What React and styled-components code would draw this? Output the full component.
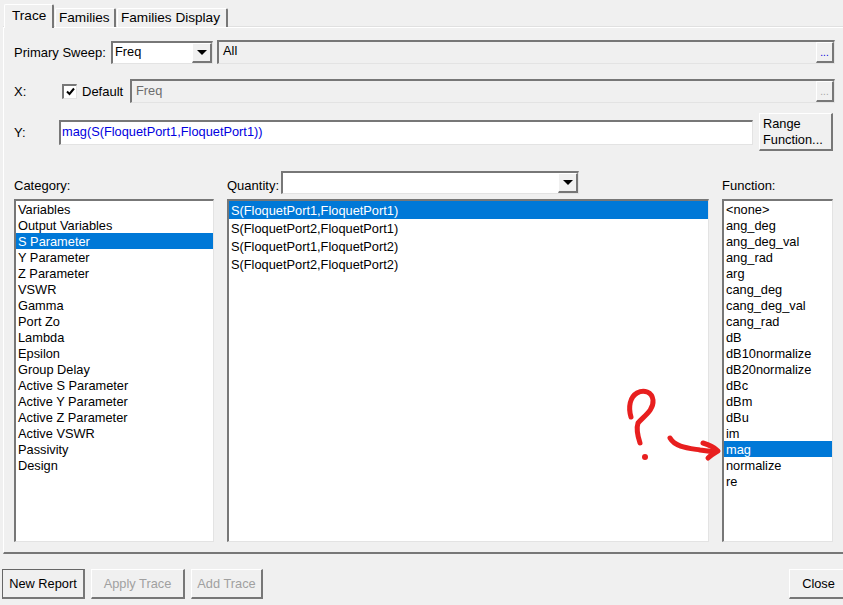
import React from "react";
import styled, { createGlobalStyle } from "styled-components";

const GlobalStyle = createGlobalStyle`
  html, body {
    margin: 0;
    padding: 0;
    background: #f0f0f0;
  }
  body {
    font-family: "Liberation Sans", Arial, sans-serif;
    font-size: 12.8px;
    color: #000;
  }
`;

const Window = styled.div`
  position: relative;
  width: 843px;
  height: 605px;
  overflow: hidden;
  padding-top: 4px;
  box-sizing: border-box;
`;

const TabBar = styled.div`
  display: flex;
  align-items: flex-end;
  height: 23px;
  padding-left: 4px;
  gap: 1px;
`;

const Tab = styled.div`
  box-sizing: border-box;
  height: ${(p) => (p.$active ? "24px" : "19px")};
  width: ${(p) => p.$w}px;
  margin-bottom: ${(p) => (p.$active ? "-1px" : "0")};
  padding: ${(p) => (p.$active ? "3px 0 0 7px" : "1px 0 0 3px")};
  font-size: 13.6px;
  background: #f0f0f0;
  border-top: 1px solid #fff;
  border-left: 1px solid #fff;
  border-right: 2px solid #777;
  border-radius: 2px 2px 0 0;
  position: relative;
  z-index: ${(p) => (p.$active ? 1 : 0)};
`;

const Pane = styled.div`
  box-sizing: border-box;
  margin-left: 3px;
  width: 860px;
  height: 527px;
  border-top: 1px solid #fff;
  border-left: 1px solid #fff;
  border-bottom: 2px solid #777;
  box-shadow: 0 -1px 0 #e0e0e0;
  padding: 12px 0 0 10px;
`;

const Row = styled.div`
  display: flex;
  align-items: center;
  height: ${(p) => p.$h}px;
  margin-top: ${(p) => p.$mt || 0}px;
`;

const Label = styled.span`
  display: block;
  width: ${(p) => (p.$w ? `${p.$w}px` : "auto")};
  flex: none;
  font-size: 13px;
  white-space: nowrap;
`;

const sunken = `
  box-sizing: border-box;
  border-top: 2px solid #777;
  border-left: 2px solid #777;
  border-right: 1px solid #e3e3e3;
  border-bottom: 1px solid #e3e3e3;
`;

const Combo = styled.div`
  ${sunken}
  display: flex;
  justify-content: space-between;
  flex: none;
  width: ${(p) => p.$w}px;
  height: 23px;
  background: #fff;
  padding-left: 2px;
  line-height: 17px;
`;

const ComboArrow = styled.div`
  box-sizing: border-box;
  width: 20px;
  height: 20px;
  background: #f0f0f0;
  border-top: 1px solid #fff;
  border-left: 1px solid #fff;
  border-right: 2px solid #777;
  border-bottom: 2px solid #777;
  display: flex;
  align-items: center;
  justify-content: center;
  &::after {
    content: "";
    border-left: 5px solid transparent;
    border-right: 5px solid transparent;
    border-top: 5px solid #000;
  }
`;

const Field = styled.div`
  ${sunken}
  display: flex;
  justify-content: space-between;
  flex: none;
  width: ${(p) => p.$w}px;
  height: 24px;
  margin-left: ${(p) => p.$ml || 0}px;
  padding-left: 4px;
  line-height: ${(p) => (p.$disabled ? "20px" : "18px")};
  color: ${(p) => (p.$disabled ? "#6d6d6d" : "#000")};
`;

const DotsButton = styled.div`
  box-sizing: border-box;
  width: 18px;
  height: 21px;
  border-top: 1px solid #fff;
  border-left: 1px solid #fff;
  border-right: 2px solid #777;
  border-bottom: 2px solid #777;
  text-align: center;
  font-size: 10px;
  line-height: 19px;
  color: ${(p) => (p.$disabled ? "#a5a5a5" : "#0000e0")};
`;

const CheckBox = styled.span`
  ${sunken}
  flex: none;
  display: flex;
  align-items: center;
  justify-content: center;
  width: 15px;
  height: 15px;
  background: #fff;
  margin-left: 34px;
  margin-right: 5px;
`;

const YInput = styled.div`
  ${sunken}
  flex: none;
  width: 694px;
  height: 25px;
  background: #fff;
  padding-left: 1px;
  line-height: 19px;
  color: #0000e0;
`;

const RangeButton = styled.div`
  box-sizing: border-box;
  flex: none;
  width: 74px;
  height: 38px;
  margin-left: 6px;
  padding: 2px 0 0 3px;
  line-height: 16px;
  border-top: 1px solid #fff;
  border-left: 1px solid #fff;
  border-right: 2px solid #777;
  border-bottom: 2px solid #777;
`;

const Columns = styled.div`
  display: grid;
  grid-template-columns: 200px 482px 111px;
  column-gap: 13px;
  margin-top: 20px;
`;

const Column = styled.div`
  display: flex;
  flex-direction: column;
`;

const ColumnHead = styled.div`
  display: flex;
  align-items: flex-end;
  height: 23px;
  margin-bottom: 5px;
  font-size: 13px;
  line-height: 16px;
`;

const List = styled.div`
  ${sunken}
  height: 343px;
  background: #fff;
  overflow: hidden;
`;

const Item = styled.div`
  height: ${(p) => p.$h || 16}px;
  line-height: ${(p) => (p.$h || 16) + 1}px;
  padding-left: 2px;
  white-space: nowrap;
  background: ${(p) => (p.$sel ? "#0078d7" : "transparent")};
  color: ${(p) => (p.$sel ? "#fff" : "#000")};
`;

const Footer = styled.div`
  display: flex;
  margin-top: 15px;
  padding-left: 2px;
  gap: 6px;
`;

const FooterButton = styled.div`
  box-sizing: border-box;
  flex: none;
  width: ${(p) => p.$w}px;
  height: 30px;
  margin-left: ${(p) => p.$ml || 0}px;
  display: flex;
  align-items: center;
  justify-content: center;
  color: ${(p) => (p.$disabled ? "#a0a0a0" : "#000")};
  border-top: 1px solid ${(p) => (p.$default ? "#666" : "#fff")};
  border-left: 1px solid ${(p) => (p.$default ? "#666" : "#fff")};
  border-right: 2px solid #777;
  border-bottom: 2px solid #777;
`;

const Scribble = styled.svg`
  position: absolute;
  left: 620px;
  top: 385px;
  width: 110px;
  height: 80px;
`;

const categories = ["Variables", "Output Variables", "S Parameter", "Y Parameter", "Z Parameter", "VSWR", "Gamma", "Port Zo", "Lambda", "Epsilon", "Group Delay", "Active S Parameter", "Active Y Parameter", "Active Z Parameter", "Active VSWR", "Passivity", "Design"];
const quantities = ["S(FloquetPort1,FloquetPort1)", "S(FloquetPort2,FloquetPort1)", "S(FloquetPort1,FloquetPort2)", "S(FloquetPort2,FloquetPort2)"];
const functions = ["<none>", "ang_deg", "ang_deg_val", "ang_rad", "arg", "cang_deg", "cang_deg_val", "cang_rad", "dB", "dB10normalize", "dB20normalize", "dBc", "dBm", "dBu", "im", "mag", "normalize", "re"];

export default function App() {
  return (
    <Window>
      <GlobalStyle />
      <TabBar>
        <Tab $active $w={50}>Trace</Tab>
        <Tab $w={61}>Families</Tab>
        <Tab $w={111}>Families Display</Tab>
      </TabBar>
      <Pane>
        <Row $h={24}>
          <Label $w={97}>Primary Sweep:</Label>
          <Combo $w={102}>
            Freq
            <ComboArrow />
          </Combo>
          <Field $w={618} $ml={4}>
            All
            <DotsButton>...</DotsButton>
          </Field>
        </Row>
        <Row $h={24} $mt={15}>
          <Label $w={14}>X:</Label>
          <CheckBox>
            <svg width="11" height="11" viewBox="0 0 11 11">
              <path d="M2 5.5 L4.5 8 L9 2.5" fill="none" stroke="#000" strokeWidth="2" />
            </svg>
          </CheckBox>
          <Label $w={48}>Default</Label>
          <Field $w={705} $disabled>
            Freq
            <DotsButton $disabled>...</DotsButton>
          </Field>
        </Row>
        <Row $h={38} $mt={10}>
          <Label $w={45}>Y:</Label>
          <YInput>mag(S(FloquetPort1,FloquetPort1))</YInput>
          <RangeButton>Range<br />Function...</RangeButton>
        </Row>
        <Columns>
          <Column>
            <ColumnHead>Category:</ColumnHead>
            <List>
              {categories.map((c) => (
                <Item key={c} $sel={c === "S Parameter"}>{c}</Item>
              ))}
            </List>
          </Column>
          <Column>
            <ColumnHead>
              <Label $w={54}>Quantity:</Label>
              <Combo $w={298}>
                <span />
                <ComboArrow />
              </Combo>
            </ColumnHead>
            <List>
              {quantities.map((q, i) => (
                <Item key={q} $h={18} $sel={i === 0}>{q}</Item>
              ))}
            </List>
          </Column>
          <Column>
            <ColumnHead>Function:</ColumnHead>
            <List>
              {functions.map((f) => (
                <Item key={f} $sel={f === "mag"}>{f}</Item>
              ))}
            </List>
          </Column>
        </Columns>
      </Pane>
      <Footer>
        <FooterButton $w={83} $default>New Report</FooterButton>
        <FooterButton $w={94} $disabled>Apply Trace</FooterButton>
        <FooterButton $w={72} $disabled>Add Trace</FooterButton>
        <FooterButton $w={60} $ml={520}>Close</FooterButton>
      </Footer>
      <Scribble viewBox="0 0 110 80">
        <g fill="none" stroke="#e81f1f" strokeLinecap="round" strokeLinejoin="round">
          <path strokeWidth="5" d="M11 32 C8 22 10 12 17 8 C24 4 32 7 33 15 C34 25 24 31 18 38 C16 44 18 52 20 58" />
          <path strokeWidth="5" d="M50 53 C55 62 68 63 80 65 L95 67" />
          <path strokeWidth="5" d="M83 58 C90 60 95 63 98 66 C95 68 91 70 88 73" />
        </g>
        <circle cx="25" cy="72" r="3" fill="#e81f1f" />
      </Scribble>
    </Window>
  );
}
